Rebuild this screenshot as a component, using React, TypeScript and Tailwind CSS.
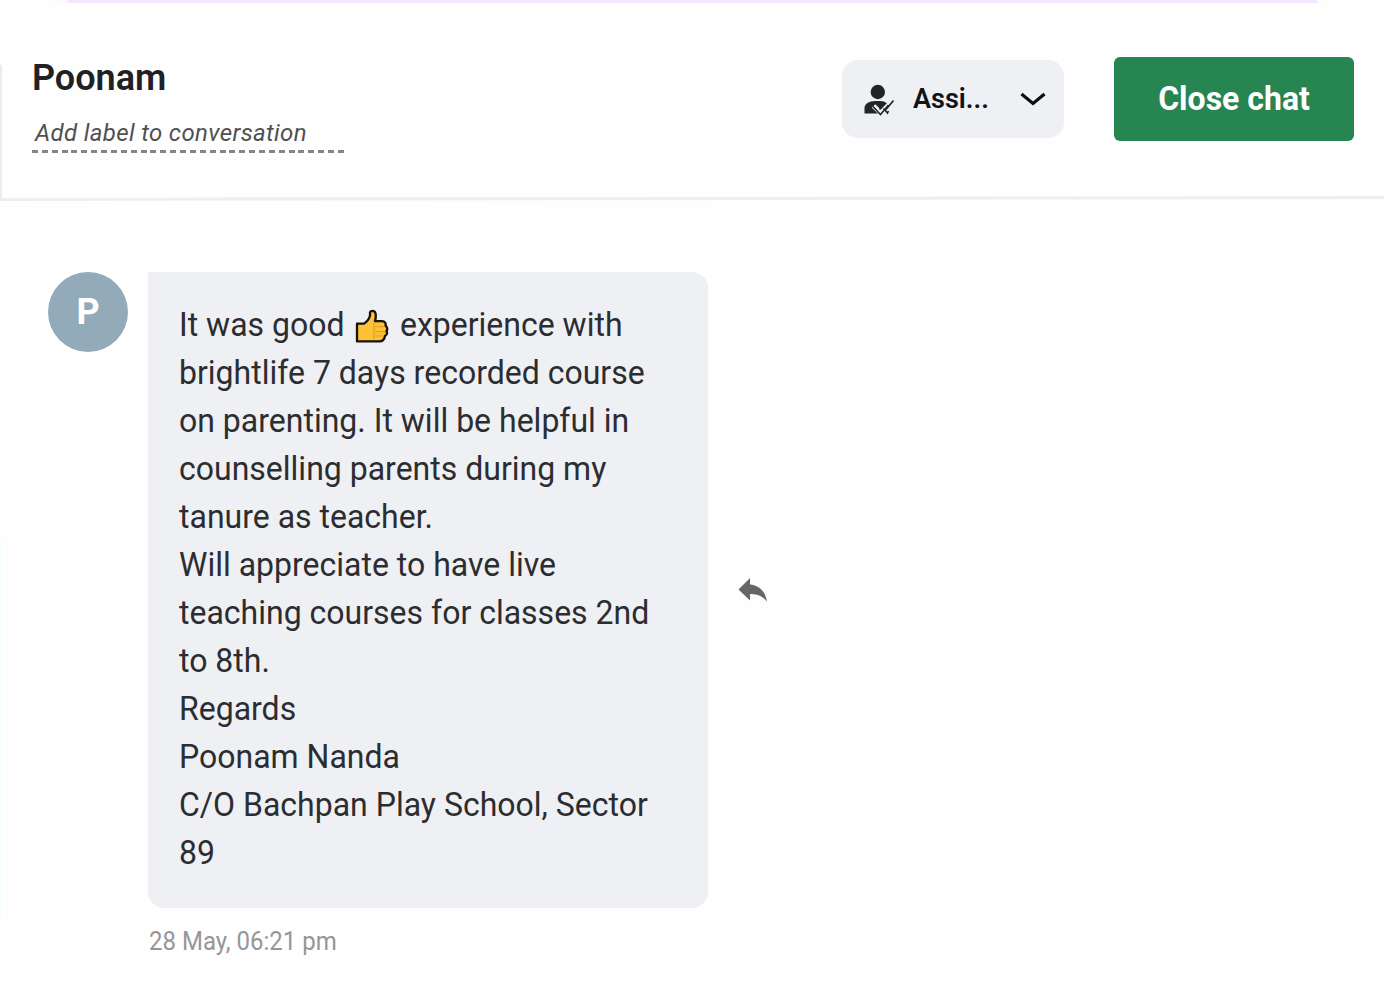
import { ReactNode } from "react";

// ── Icons ─────────────────────────────────────────────────────────────────────

function AssigneeIcon() {
  return (
    <svg className="mt-[2px] w-[30px] h-[32px] shrink-0" viewBox="0 0 30 32">
      <circle cx="13.800" cy="8" r="7.200" fill="#222428" />
      <path
        d="M0.500 29.500v-5.500c0-4 4.500-7 10.500-7h5c4 0 6.500 1.500 8 4L18 29.500z"
        fill="#222428"
      />
      <path
        d="M9.500 22l7.500 7L29 16.500"
        fill="none"
        stroke="#eff0f4"
        strokeWidth="5"
      />
      <path
        d="M9 22.500l7.500 8L24.500 21M15.500 25.500l3-3.500M19.500 24.500l4 4.500 1-2M21.500 26L29.500 16.500"
        fill="none"
        stroke="#222428"
        strokeWidth="1.600"
      />
    </svg>
  );
}

function ChevronIcon() {
  return (
    <svg className="-mt-px w-[26px] h-[14px] shrink-0" viewBox="0 0 26 14">
      <path
        d="M1.500 2l11.500 9.500L24.500 2"
        fill="none"
        stroke="#0c0d10"
        strokeWidth="3.200"
      />
    </svg>
  );
}

function ThumbsUp() {
  return (
    <svg
      className="inline-block w-[34px] h-[32px] align-[-7px] ml-[2.5px] mr-[3px]"
      viewBox="0 0 34 34"
      preserveAspectRatio="none"
    >
      <path
        d="M2 14.500h7c3-2 5-4.500 6-8V3.500c0-2.500 4.500-3 5.500.5.700 3 .2 5.500-.5 8h7c3 0 4.200 2.500 3.500 4.500 2 1.500 2.200 4 1 5.500 1 2 .2 4-1.500 5-.5 3-2.500 5.500-5.500 5.500H2z"
        fill="#fcc134"
        stroke="#17120a"
        strokeWidth="2.300"
        strokeLinejoin="round"
      />
      <path
        d="M19 13v17.500M20 17.500h10M20 22.500h10M20 27h8.500"
        fill="none"
        stroke="#e2a02c"
        strokeWidth="1.200"
      />
    </svg>
  );
}

function ReplyIcon() {
  return (
    <svg className="w-[30px] h-[24px]" viewBox="0 0 30 24">
      <path
        d="M12 0v6.500C22 7.500 27.500 14 29 23.500 25 18.500 20 16 12 16v6.500L0.500 11.500z"
        fill="#666"
      />
    </svg>
  );
}

// ── Data ──────────────────────────────────────────────────────────────────────

const messageLines: ReactNode[] = [
  <>
    It was good <ThumbsUp /> experience with
  </>,
  "brightlife 7 days recorded course",
  "on parenting. It will be helpful in",
  "counselling parents during my",
  "tanure as teacher.",
  "Will appreciate to have live",
  "teaching courses for classes 2nd",
  "to 8th.",
  "Regards",
  "Poonam Nanda",
  "C/O Bachpan Play School, Sector",
  "89",
];

// ── Sections ──────────────────────────────────────────────────────────────────

function ChatHeader() {
  return (
    <header className="mt-[62px] h-[135px] flex items-start justify-between border-l-2 border-[#ececee] pl-[31px] pr-8">
      <div className="-mt-[7px]">
        <h1 className="text-[36px] leading-[40px] font-semibold text-[#202124] -ml-px">
          Poonam
        </h1>
        <p className="mt-[19px] pl-[2px] h-[33px] text-[24px] leading-[32px] tracking-[0.36px] italic text-[#505050] whitespace-nowrap">
          Add label to conversation
        </p>
        <div className="-ml-px w-[312px] h-[3px] bg-[repeating-linear-gradient(90deg,#858585_0_6px,transparent_6px_9.87px)]" />
      </div>
      <div className="-mt-[8px] flex items-start gap-[50px]">
        <button className="mt-[3px] w-[222px] h-[78px] rounded-2xl bg-[#eff0f4] flex items-center pl-[22px]">
          <AssigneeIcon />
          <span className="ml-[19px] w-[107px] text-left text-[27px] leading-8 font-semibold text-[#111317]">
            Assi...
          </span>
          <ChevronIcon />
        </button>
        <button className="w-[240px] h-[84px] rounded-md bg-[#278552] text-white text-[32px] font-bold whitespace-nowrap">
          <span className="block scale-y-[1.04]">Close chat</span>
        </button>
      </div>
    </header>
  );
}

function Message() {
  return (
    <div className="mt-[72px] pl-12 flex items-start">
      <div className="w-20 h-20 rounded-full bg-[#93aab8] flex items-center justify-center text-white text-[36px] font-bold">
        P
      </div>
      <div className="ml-5">
        <div className="w-[560px] h-[636px] rounded-2xl rounded-tl-none bg-[#eff0f4] pt-[28px] pl-[31px] text-[32px] leading-[48px] text-[#2b2d31]">
          {messageLines.map((line, i) => (
            <p key={i} className="h-12 whitespace-nowrap scale-y-[1.05]">
              {line}
            </p>
          ))}
        </div>
        <p className="mt-[18px] pl-px text-[24px] leading-8 text-[#969696] scale-y-[1.04]">
          28 May, 06:21 pm
        </p>
      </div>
      <div className="ml-[30px] mt-[306px]">
        <ReplyIcon />
      </div>
    </div>
  );
}

export default function App() {
  return (
    <main className="relative w-[1386px] h-[988px] overflow-hidden bg-[#fefefe] font-['Roboto',sans-serif]">
      <div className="mx-[54px] h-[3px] bg-linear-to-r from-transparent via-[#f3e6fd] via-[3%] to-transparent">
        <div className="mx-[14px] h-full bg-[#f3e6fd]" />
      </div>
      <ChatHeader />
      <div className="-mt-[3px] h-[3px] w-[1384px] bg-[#eeeef0] -skew-y-[0.08deg]" />
      <Message />
      {/* faint tint along the left edge */}
      <div className="absolute left-0 top-[537px] w-px h-[384px] bg-[#f2fffb]" />
    </main>
  );
}
